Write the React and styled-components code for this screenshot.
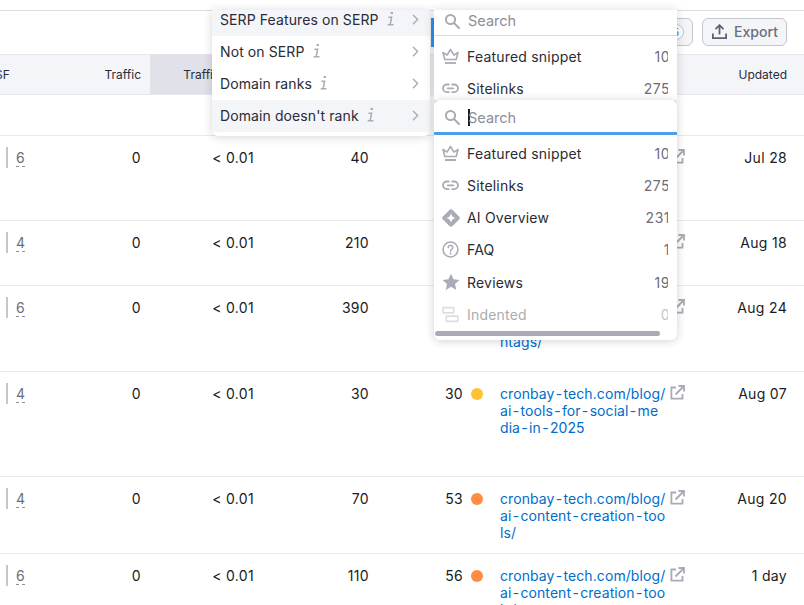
import React from "react";
import styled, { createGlobalStyle } from "styled-components";
import { ChevronRight } from "lucide-react";

// links are stored line by line, the way the table wraps them
const rows = [
  { sf: 6, vol: 40, kd: 18, dot: "#59ddaa", h: 85, updated: "Jul 28", url: ["cronbay-tech.com/blog/", "ai-marketing-tools-for-s", "mall-business-owners-in", "-2025"] },
  { sf: 4, vol: 210, kd: 24, dot: "#59ddaa", h: 65, updated: "Aug 18", url: ["cronbay-tech.com/blog/", "ai-video-tools/"] },
  { sf: 6, vol: 390, kd: 41, dot: "#ffc233", h: 86, updated: "Aug 24", url: ["cronbay-tech.com/blog/", "ai-tools-for-reels-has", "htags/"] },
  { sf: 4, vol: 30, kd: 30, dot: "#ffc233", h: 105, updated: "Aug 07", url: ["cronbay-tech.com/blog/", "ai-tools-for-social-me", "dia-in-2025"] },
  { sf: 4, vol: 70, kd: 53, dot: "#ff8c43", h: 77, updated: "Aug 20", url: ["cronbay-tech.com/blog/", "ai-content-creation-too", "ls/"] },
  { sf: 6, vol: 110, kd: 56, dot: "#ff8c43", h: 77, updated: "1 day", url: ["cronbay-tech.com/blog/", "ai-content-creation-too", "ls/"] },
];

const menuItems = [
  { label: "SERP Features on SERP", active: true },
  { label: "Not on SERP" },
  { label: "Domain ranks" },
  { label: "Domain doesn't rank", active: true },
];

function SearchIcon() {
  return (
    <svg width="16" height="16" viewBox="0 0 16 16" fill="none" stroke="#a9abb6" strokeWidth="2">
      <circle cx="6.5" cy="6.5" r="4.6" />
      <path d="M10 10l5 5" strokeLinecap="round" />
    </svg>
  );
}

function CrownIcon() {
  return (
    <svg width="17" height="17" viewBox="0 0 17 17" fill="none" stroke="#a9abb6" strokeWidth="1.6" strokeLinejoin="round">
      <path d="M1 4.500l4 2.600L8.500 1.500 12 7.100l4-2.600-1.800 7H2.800z" />
      <path d="M3 15h11" strokeWidth="1.800" />
    </svg>
  );
}

function LinkIcon() {
  return (
    <svg width="17" height="17" viewBox="0 0 17 17" fill="none" stroke="#a9abb6" strokeWidth="1.8" strokeLinecap="round">
      <path d="M6.800 4.500H4.800a3.800 3.800 0 0 0 0 7.600h2" />
      <path d="M10.200 4.500h2a3.800 3.800 0 0 1 0 7.600h-2" />
      <path d="M5.800 8.300h5.400" />
    </svg>
  );
}

function SparkIcon() {
  return (
    <svg width="18" height="18" viewBox="0 0 17 17">
      <path
        fill="#a9abb6"
        fillRule="evenodd"
        d="M7 .9a2.100 2.100 0 0 1 3 0l6.100 6.100a2.100 2.100 0 0 1 0 3L10 16.100a2.100 2.100 0 0 1-3 0L.9 10a2.100 2.100 0 0 1 0-3zM8.500 3.900C8.100 6.500 6.500 8.100 3.900 8.500c2.600.4 4.200 2 4.600 4.600.4-2.600 2-4.200 4.600-4.600-2.600-.4-4.200-2-4.600-4.600z"
      />
    </svg>
  );
}

function HelpIcon() {
  return (
    <svg width="17" height="17" viewBox="0 0 16 16" fill="none" stroke="#a9abb6" strokeWidth="1.5" strokeLinecap="round">
      <circle cx="8" cy="8" r="7" />
      <path d="M5.900 6.200a2.100 2.100 0 1 1 3.300 1.700c-.8.500-1.200.9-1.200 1.700" />
      <path d="M8 11.800v.1" strokeWidth="1.800" />
    </svg>
  );
}

function StarIcon() {
  return (
    <svg width="18" height="18" viewBox="0 0 17 17">
      <path fill="#a9abb6" d="M8.500.8l2.400 5.200 5.600.6-4.200 3.800 1.200 5.600-5-2.900-5 2.900 1.200-5.600L.5 6.600l5.600-.6z" />
    </svg>
  );
}

function IndentIcon() {
  return (
    <svg width="17" height="17" viewBox="0 0 16 16" fill="none" stroke="#a9abb6" strokeWidth="1.500">
      <rect x="1" y="1.500" width="10" height="5" rx="0.500" />
      <rect x="4" y="9.500" width="11" height="5" rx="0.500" />
    </svg>
  );
}

function ExternalIcon() {
  return (
    <svg width="15" height="15" viewBox="0 0 15 15" fill="none" stroke="#a9abb6" strokeWidth="1.800">
      <path d="M6 2.500H1.400v11.100h11.100V9" />
      <path d="M5.500 9.500L13.500 1.500M8.500 1h5.500v5.500" />
    </svg>
  );
}

function ExportIcon() {
  return (
    <svg width="15" height="15" viewBox="0 0 15 15" fill="none" stroke="#5f6270" strokeWidth="1.800">
      <path d="M7.500 10.500V1.500M3.500 5.200l4-4 4 4" />
      <path d="M.9 9.500v4.600h13.200V9.500" />
    </svg>
  );
}

function InfoIcon() {
  return (
    <svg width="8" height="14" viewBox="0 0 8 14" fill="none" stroke="#a9abb6" strokeWidth="1.500">
      <path d="M3.600 1h2.400" strokeWidth="1.800" />
      <path d="M1.400 5.200h3.200l-1.400 7.100M.7 12.700h5.800" />
    </svg>
  );
}

const serpItems = [
  { label: "Featured snippet", count: "10", Icon: CrownIcon },
  { label: "Sitelinks", count: "275", Icon: LinkIcon },
  { label: "AI Overview", count: "231", Icon: SparkIcon },
  { label: "FAQ", count: "1", Icon: HelpIcon },
  { label: "Reviews", count: "19", Icon: StarIcon },
  { label: "Indented", count: "0", Icon: IndentIcon, off: true },
];

function SerpList({ items, top }) {
  return (
    <List $top={top}>
      {items.map((item) => (
        <SerpItem key={item.label} $off={item.off}>
          <IconSlot>
            <item.Icon />
          </IconSlot>
          <SerpLabel>{item.label}</SerpLabel>
          <Count>{item.count}</Count>
        </SerpItem>
      ))}
    </List>
  );
}

// the hyphens in these links sit wider apart than the font's own
function UrlText({ text }) {
  return text.split("-").map((part, i) => (
    <React.Fragment key={i}>
      {i > 0 && <Hyphen>-</Hyphen>}
      {part}
    </React.Fragment>
  ));
}

export default function App() {
  return (
    <Page>
      <GlobalStyle />
      <Toolbar>
        <ToolButton>
          Columns <Badge>5</Badge>
        </ToolButton>
        <ToolButton>
          <ExportIcon />
          Export
        </ToolButton>
      </Toolbar>
      <HeadRow>
        <HeadCell $left>SF</HeadCell>
        <HeadCell>Traffic</HeadCell>
        <HeadCell $sorted>Traffic %</HeadCell>
        <HeadCell>Volume</HeadCell>
        <HeadCell>KD %</HeadCell>
        <HeadCell $url>URL</HeadCell>
        <HeadCell $last>Updated</HeadCell>
      </HeadRow>
      <Row $h={41} />
      {rows.map((row) => (
        <Row key={row.updated} $h={row.h}>
          <SfCell>
            <SfNumber>{row.sf}</SfNumber>
          </SfCell>
          <Cell>0</Cell>
          <Cell>&lt; 0.01</Cell>
          <Cell>{row.vol}</Cell>
          <KdCell>
            {row.kd}
            <Dot $color={row.dot} />
          </KdCell>
          <UrlCell>
            <Url>
              {row.url.map((line) => (
                <UrlLine key={line}>
                  <UrlText text={line} />
                </UrlLine>
              ))}
            </Url>
            <ExternalIcon />
          </UrlCell>
          <Cell $last>{row.updated}</Cell>
        </Row>
      ))}

      <Menu>
        {menuItems.map((item) => (
          <MenuItem key={item.label} $active={item.active}>
            {item.label}
            <InfoIcon />
            <Chevron size={17} strokeWidth={2} />
          </MenuItem>
        ))}
      </Menu>
      <FocusBar />
      <BackPanel>
        <SearchRow $back>
          <SearchIcon />
          <SearchField placeholder="Search" readOnly />
        </SearchRow>
        <SerpList items={serpItems.slice(0, 2)} top={4} />
      </BackPanel>
      <FrontPanel>
        <SearchRow $focus>
          <SearchIcon />
          <Caret />
          <SearchField placeholder="Search" readOnly />
        </SearchRow>
        <SerpList items={serpItems} top={2} />
        <ScrollBar />
      </FrontPanel>
    </Page>
  );
}

const GlobalStyle = createGlobalStyle`
  html, body {
    margin: 0;
    height: 605px;
    overflow: hidden;
    background: #fff;
    font-family: Inter, "Noto Sans", sans-serif;
    color: #191b23;
  }
  * {
    box-sizing: border-box;
  }
`;

const Page = styled.div`
  position: relative;
  width: 804px;
  height: 605px;
  overflow: hidden;
  padding-top: 10px;
`;

const Toolbar = styled.div`
  display: flex;
  justify-content: flex-end;
  align-items: center;
  gap: 9px;
  height: 45px;
  padding: 0 17px 2px 0;
  border-top: 1px solid #dcdde3;
  border-bottom: 1px solid #e6e7ed;
`;

const ToolButton = styled.div`
  display: flex;
  align-items: center;
  gap: 7px;
  height: 28px;
  padding: 0 8px 0 9px;
  border: 1px solid #c4c7cf;
  border-radius: 6px;
  background: #f4f5f9;
  color: #6c6e79;
  font-size: 14.1px;
  font-weight: 500;
`;

const Badge = styled.span`
  width: 16px;
  height: 16px;
  border-radius: 50%;
  border: 1px solid #c4c7cf;
  background: #fff;
  color: #2b8fe8;
  font-size: 10px;
  line-height: 14px;
  text-align: center;
`;

const grid = `
  display: grid;
  grid-template-columns: 50px 100px 113px 115px 112px 206px 108px;
`;

const HeadRow = styled.div`
  ${grid}
  height: 40px;
  background: #f4f5f9;
  border-bottom: 1px solid #e6e7ed;
`;

const HeadCell = styled.div`
  display: flex;
  align-items: center;
  justify-content: ${(p) => (p.$left || p.$url ? "flex-start" : "flex-end")};
  padding-right: ${(p) => (p.$last ? "17px" : p.$sorted ? "28px" : "9px")};
  padding-left: ${(p) => (p.$url ? "10px" : "0")};
  margin-left: ${(p) => (p.$left ? "-5px" : "0")};
  background: ${(p) => (p.$sorted ? "#e0e1e9" : "transparent")};
  font-size: 12px;
  color: #2a2c35;
`;

const Row = styled.div`
  ${grid}
  height: ${(p) => p.$h}px;
  border-bottom: 1px solid #e9eaef;
  font-size: 14px;
  line-height: 17px;
  letter-spacing: 0.32px;
`;

const Cell = styled.div`
  padding: 13px ${(p) => (p.$last ? "17px" : "9px")} 0 0;
  text-align: right;
`;

const SfCell = styled.div`
  align-self: start;
  height: 21px;
  margin: 11px 0 0 6px;
  padding: 2px 0 0 8px;
  border-left: 2px solid #c4c7cf;
`;

const SfNumber = styled.span`
  color: #6c6e79;
  border-bottom: 1px dashed #8b8e99;
`;

const KdCell = styled.div`
  display: flex;
  justify-content: flex-end;
  align-items: flex-start;
  gap: 8px;
  padding: 13px 7px 0 0;
`;

const Dot = styled.span`
  width: 12px;
  height: 12px;
  margin-top: 3px;
  border-radius: 50%;
  background: ${(p) => p.$color};
`;

const UrlCell = styled.div`
  display: flex;
  align-items: flex-start;
  gap: 5px;
  padding: 13px 0 0 10px;
`;

const Url = styled.a`
  width: 165px;
  color: #006dca;
  letter-spacing: 0.08px;
`;

const UrlLine = styled.span`
  display: block;
  white-space: nowrap;
`;

const Hyphen = styled.span`
  padding: 0 1.25px;
`;

const Menu = styled.div`
  position: absolute;
  top: 10px;
  left: 212px;
  width: 218px;
  height: 126px;
  padding-bottom: 4px;
  display: flex;
  flex-direction: column;
  justify-content: flex-end;
  overflow: hidden;
  background: #fff;
  border-radius: 0 0 6px 6px;
  box-shadow: 0 1px 10px rgba(25, 27, 35, 0.18);
`;

const MenuItem = styled.div`
  flex: none;
  display: flex;
  align-items: center;
  gap: 8px;
  height: 32px;
  padding: 0 8px 2px;
  background: ${(p) => (p.$active ? "#f4f5f9" : "#fff")};
  font-size: 14px;
  letter-spacing: 0.1px;
  white-space: nowrap;
  color: #2a2c35;
`;

const Chevron = styled(ChevronRight)`
  margin-left: auto;
  margin-right: -2px;
  color: #a9abb6;
`;

const FocusBar = styled.div`
  position: absolute;
  top: 18px;
  left: 431px;
  width: 3px;
  height: 29px;
  background: #2b8fe8;
`;

const BackPanel = styled.div`
  position: absolute;
  top: 10px;
  left: 434px;
  width: 243px;
  height: 90px;
  overflow: hidden;
  background: #fff;
  box-shadow: 0 1px 10px rgba(25, 27, 35, 0.18);
`;

const FrontPanel = styled.div`
  position: absolute;
  top: 100px;
  left: 434px;
  width: 243px;
  height: 240px;
  overflow: hidden;
  background: #fff;
  border-radius: 6px;
  box-shadow: 0 1px 10px rgba(25, 27, 35, 0.2);

  &::before {
    content: "";
    position: absolute;
    top: 0;
    left: 0;
    right: 0;
    height: 3px;
    background: linear-gradient(to right, #2b8fe8 3px, #e6e7ed 3px, #e6e7ed calc(100% - 3px), #2b8fe8 calc(100% - 3px));
  }
`;

const SearchRow = styled.div`
  position: relative;
  display: flex;
  align-items: center;
  gap: 8px;
  height: ${(p) => (p.$back ? "26px" : "35px")};
  padding: ${(p) => (p.$back ? "0 10px 4px" : "2px 10px 0")};
  background: #fff;
  border-radius: ${(p) => (p.$focus ? "4px 4px 0 0" : "0")};
  border-bottom: ${(p) => (p.$focus ? "3px solid #4a9fe8" : "1px solid #d8dae1")};
`;

const SearchField = styled.input`
  flex: 1;
  min-width: 0;
  padding: 0;
  border: 0;
  outline: 0;
  background: transparent;
  font-family: inherit;
  font-size: 14.5px;

  &::placeholder {
    color: #8b8e99;
    opacity: 1;
  }
`;

const Caret = styled.span`
  flex: none;
  width: 1.5px;
  height: 17px;
  margin-right: -9.5px;
  background: #191b23;
`;

const List = styled.div`
  width: 234px;
  padding-top: ${(p) => p.$top}px;
  overflow: hidden;
`;

const SerpItem = styled.div`
  display: flex;
  align-items: center;
  width: 236px;
  height: 32.25px;
  padding: 0 0 0 8px;
  font-size: 14px;
  letter-spacing: 0.2px;
  color: #2a2c35;
  opacity: ${(p) => (p.$off ? 0.4 : 1)};
`;

const IconSlot = styled.span`
  display: flex;
  width: 25px;
`;

const SerpLabel = styled.span`
  flex: 1;
`;

const Count = styled.span`
  color: #6c6e79;
  letter-spacing: 0.5px;
`;

const ScrollBar = styled.div`
  width: 225px;
  height: 5px;
  margin: 0 0 0 1px;
  border-radius: 3px;
  background: #a9abb6;
`;
